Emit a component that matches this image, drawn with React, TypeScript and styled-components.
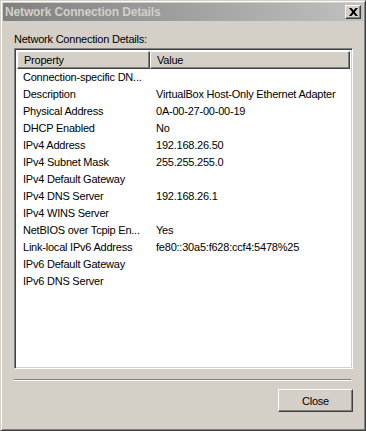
import React from 'react';
import styled, { createGlobalStyle } from 'styled-components';

const GlobalStyle = createGlobalStyle`
  html, body {
    margin: 0;
    padding: 0;
    background: #d4d0c8;
  }
  body {
    font-family: "Liberation Sans", Arial, sans-serif;
    font-size: 11px;
    letter-spacing: -0.22px;
    color: #000;
  }
`;

interface Row {
  property: string;
  value?: string;
}

const rows: Row[] = [
  { property: 'Connection-specific DN...' },
  { property: 'Description', value: 'VirtualBox Host-Only Ethernet Adapter' },
  { property: 'Physical Address', value: '0A-00-27-00-00-19' },
  { property: 'DHCP Enabled', value: 'No' },
  { property: 'IPv4 Address', value: '192.168.26.50' },
  { property: 'IPv4 Subnet Mask', value: '255.255.255.0' },
  { property: 'IPv4 Default Gateway' },
  { property: 'IPv4 DNS Server', value: '192.168.26.1' },
  { property: 'IPv4 WINS Server' },
  { property: 'NetBIOS over Tcpip En...', value: 'Yes' },
  { property: 'Link-local IPv6 Address', value: 'fe80::30a5:f628:ccf4:5478%25' },
  { property: 'IPv6 Default Gateway' },
  { property: 'IPv6 DNS Server' },
];

const Window = styled.div`
  box-sizing: border-box;
  width: 366px;
  height: 431px;
  background: #d4d0c8;
  border-top: 1px solid #d4d0c8;
  border-left: 1px solid #d4d0c8;
  border-right: 1px solid #404040;
  border-bottom: 1px solid #404040;
  box-shadow: inset 1px 1px 0 #fff, inset -1px -1px 0 #808080;
  padding: 2px;
  display: flex;
  flex-direction: column;
`;

const TitleBar = styled.div`
  height: 18px;
  background: linear-gradient(to right, #808080, #c0c0c0);
  display: flex;
  align-items: center;
  justify-content: space-between;
  padding: 0 2px 0 2px;
`;

const Title = styled.span`
  font-weight: bold;
  color: #d4d0c8;
  font-size: 12px;
  letter-spacing: -0.15px;
`;

const CloseBox = styled.div`
  box-sizing: border-box;
  width: 16px;
  height: 14px;
  background: #d4d0c8;
  border-top: 1px solid #fff;
  border-left: 1px solid #fff;
  border-right: 1px solid #404040;
  border-bottom: 1px solid #404040;
  box-shadow: inset -1px -1px 0 #808080;
  display: flex;
  align-items: center;
  justify-content: center;
  padding-bottom: 1px;
`;

const Body = styled.div`
  flex: 1;
  display: flex;
  flex-direction: column;
  padding: 11px 10px 0 11px;
`;

const Label = styled.div`
  height: 16px;
  line-height: 15px;
`;

const ListBox = styled.div`
  box-sizing: border-box;
  height: 321px;
  width: 339px;
  background: #fff;
  border-top: 1px solid #808080;
  border-left: 1px solid #808080;
  border-right: 1px solid #fff;
  border-bottom: 1px solid #fff;
  box-shadow: inset 1px 1px 0 #404040, inset -1px -1px 0 #d4d0c8;
  padding: 2px;
  display: flex;
  flex-direction: column;
`;

const Header = styled.div`
  display: grid;
  grid-template-columns: 133px 1fr;
  height: 18px;
`;

const HeaderCell = styled.div`
  box-sizing: border-box;
  background: #d4d0c8;
  border-top: 1px solid #fff;
  border-left: 1px solid #fff;
  border-right: 1px solid #404040;
  border-bottom: 1px solid #404040;
  box-shadow: inset -1px -1px 0 #808080;
  padding-left: 6px;
  line-height: 16px;
`;

const DataRow = styled.div`
  display: grid;
  grid-template-columns: 133px 1fr;
  height: 17px;
  line-height: 17px;
  white-space: nowrap;
`;

const Cell = styled.div`
  padding-left: 6px;
  overflow: hidden;
`;

const Separator = styled.div`
  margin-top: 10px;
  width: 337px;
  height: 1px;
  background: #808080;
  border-bottom: 1px solid #fff;
`;

const Footer = styled.div`
  display: flex;
  justify-content: flex-end;
  padding-top: 8px;
`;

const Button = styled.button`
  box-sizing: border-box;
  width: 75px;
  height: 23px;
  background: #d4d0c8;
  font-family: "Liberation Sans", Arial, sans-serif;
  font-size: 11px;
  letter-spacing: -0.22px;
  color: #000;
  border-top: 1px solid #fff;
  border-left: 1px solid #fff;
  border-right: 1px solid #404040;
  border-bottom: 1px solid #404040;
  box-shadow: inset -1px -1px 0 #808080;
  padding: 0;
`;

const App: React.FC = () => (
  <>
    <GlobalStyle />
    <Window>
      <TitleBar>
        <Title>Network Connection Details</Title>
        <CloseBox>
          <svg width="9" height="8" viewBox="0 0 9 8">
            <path d="M0 0h2.5l2 2.6 2-2.6H9L5.8 4 9 8H6.5l-2-2.6-2 2.6H0l3.2-4z" fill="#000" />
          </svg>
        </CloseBox>
      </TitleBar>
      <Body>
        <Label>Network Connection Details:</Label>
        <ListBox>
          <Header>
            <HeaderCell>Property</HeaderCell>
            <HeaderCell>Value</HeaderCell>
          </Header>
          {rows.map((row) => (
            <DataRow key={row.property}>
              <Cell>{row.property}</Cell>
              <Cell>{row.value ?? ''}</Cell>
            </DataRow>
          ))}
        </ListBox>
        <Separator />
        <Footer>
          <Button>Close</Button>
        </Footer>
      </Body>
    </Window>
  </>
);

export default App;
